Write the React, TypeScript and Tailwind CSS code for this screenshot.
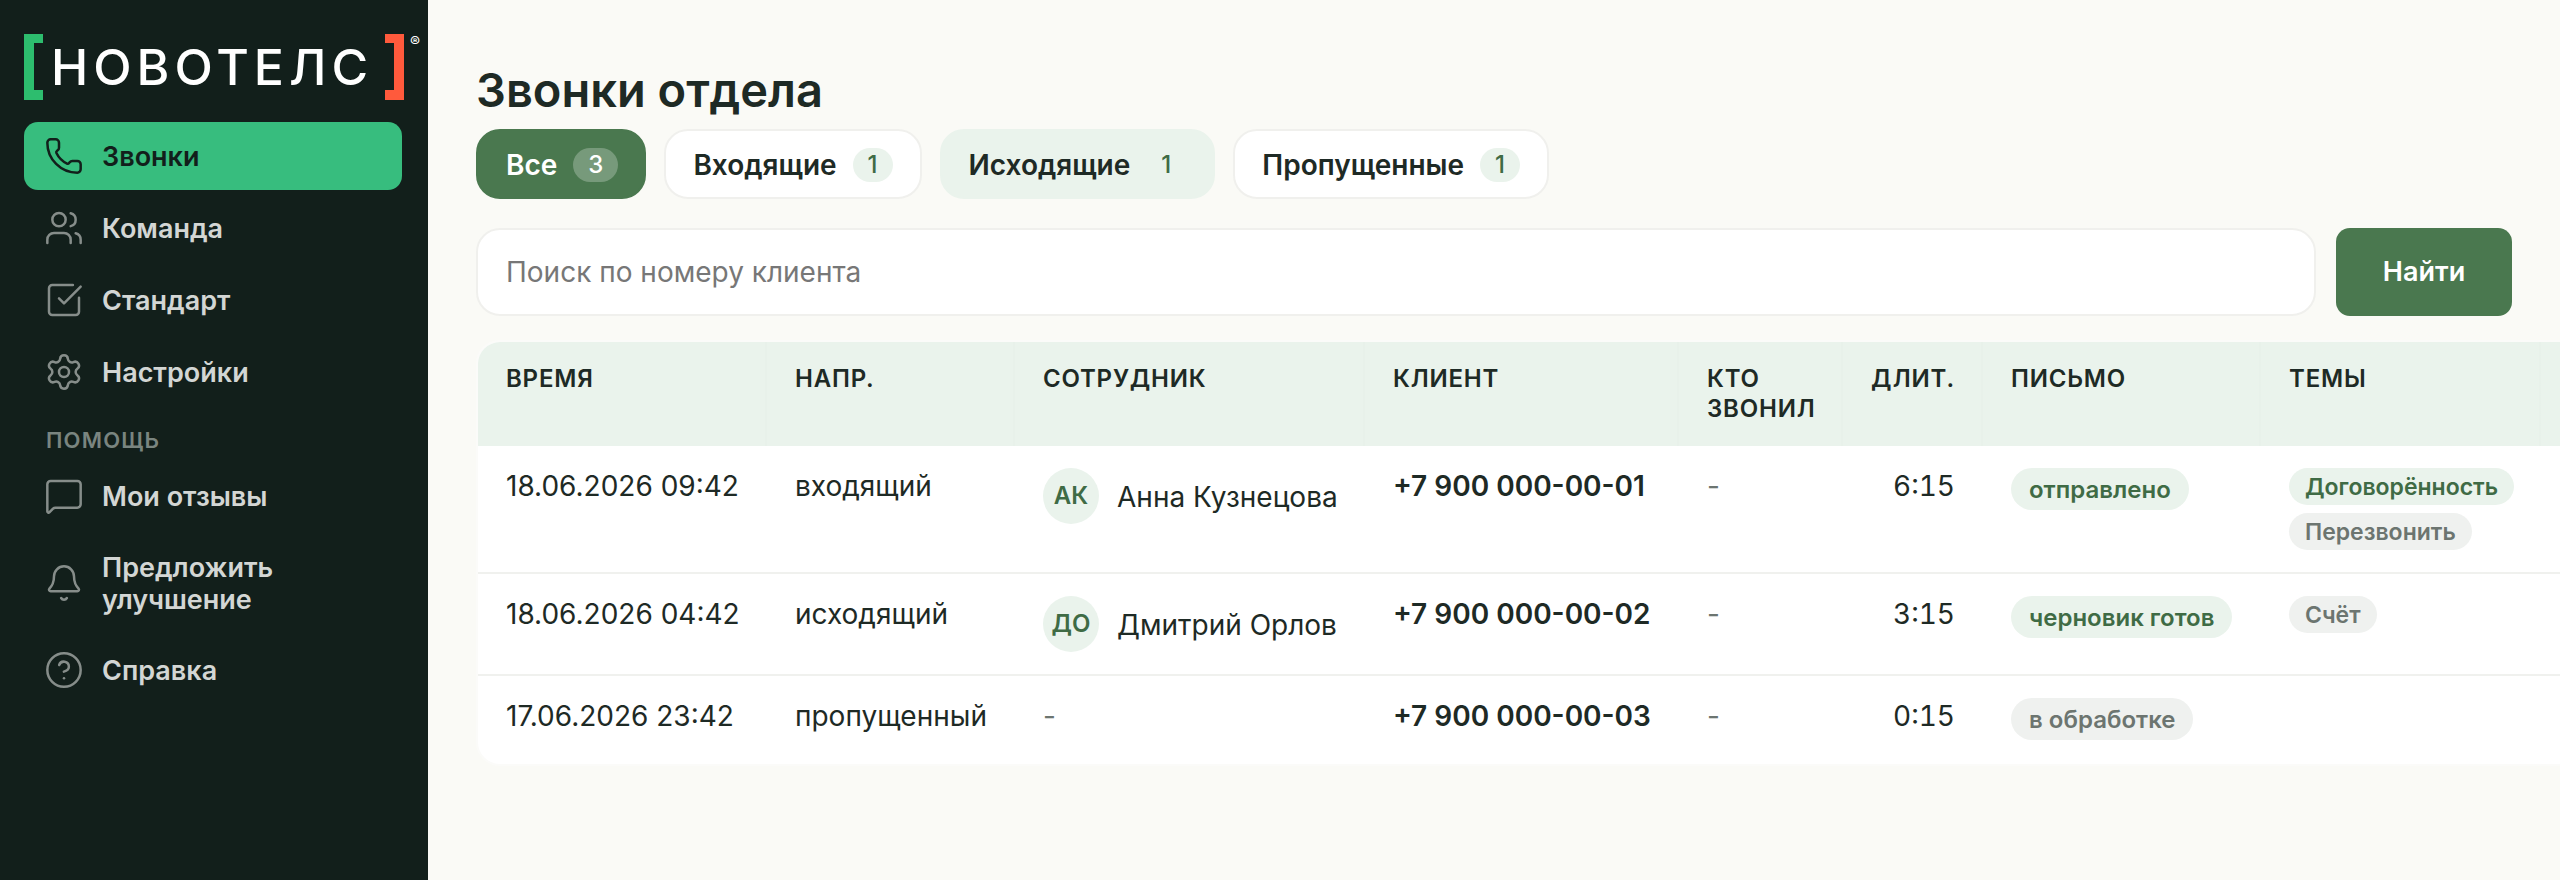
import React from 'react';
import { Phone, Users, SquareCheckBig, Settings, MessageSquare, Bell, CircleHelp } from 'lucide-react';

const font = { fontFamily: 'Inter, "Noto Sans", sans-serif' };

const navMain = [
  { label: 'Звонки', icon: Phone, active: true },
  { label: 'Команда', icon: Users },
  { label: 'Стандарт', icon: SquareCheckBig },
  { label: 'Настройки', icon: Settings },
];

const navHelp = [
  { label: 'Мои отзывы', icon: MessageSquare },
  { label: 'Предложить улучшение', icon: Bell },
  { label: 'Справка', icon: CircleHelp },
];

const tabs = [
  { label: 'Все', count: 3, kind: 'active' },
  { label: 'Входящие', count: 1, kind: 'plain' },
  { label: 'Исходящие', count: 1, kind: 'hover' },
  { label: 'Пропущенные', count: 1, kind: 'plain' },
];

const columns = [
  { label: 'Время', w: 'w-[289px]' },
  { label: 'Напр.', w: 'w-[248px]' },
  { label: 'Сотрудник', w: 'w-[350px]' },
  { label: 'Клиент', w: 'w-[314px]' },
  { label: 'Кто звонил', w: 'w-[164px]' },
  { label: 'Длит.', w: 'w-[140px]', right: true },
  { label: 'Письмо', w: 'w-[278px]' },
  { label: 'Темы', w: 'w-[280px]' },
  { label: '', w: 'w-[200px]' },
];

const calls = [
  {
    time: '18.06.2026 09:42',
    dir: 'входящий',
    initials: 'АК',
    name: 'Анна Кузнецова',
    phone: '+7 900 000-00-01',
    dur: '6:15',
    mail: { text: 'отправлено', green: true },
    topics: [
      { text: 'Договорённость', green: true },
      { text: 'Перезвонить', green: false },
    ],
  },
  {
    time: '18.06.2026 04:42',
    dir: 'исходящий',
    initials: 'ДО',
    name: 'Дмитрий Орлов',
    phone: '+7 900 000-00-02',
    dur: '3:15',
    mail: { text: 'черновик готов', green: true },
    topics: [{ text: 'Счёт', green: false }],
  },
  {
    time: '17.06.2026 23:42',
    dir: 'пропущенный',
    phone: '+7 900 000-00-03',
    dur: '0:15',
    mail: { text: 'в обработке', green: false },
    topics: [],
  },
];

const Logo = () => (
  <div className="flex items-start pl-[24px] h-[66px] mt-[34px] mb-[22px]">
    <svg width="19" height="66" viewBox="0 0 19 66" className="shrink-0">
      <path d="M0 0H19V9H10V56H19V66H0Z" fill="#2dbd6e" />
    </svg>
    <span className="w-[334px] ml-[8px] mt-[5px] text-[50px] leading-[56px] font-medium tracking-[5px] text-white whitespace-nowrap">
      НОВОТЕЛС
    </span>
    <svg width="19" height="66" viewBox="0 0 19 66" className="shrink-0">
      <path d="M19 0H0V9H9V56H0V66H19Z" fill="#ff5a3c" />
    </svg>
    <span className="ml-[6px] text-[15px] leading-[16px] text-white">®</span>
  </div>
);

const NavItem = ({ item }: { item: any }) => {
  const Icon = item.icon;
  return (
    <div
      className={`flex items-center gap-[18px] px-[20px] py-[16px] rounded-[14px] text-[27px] leading-[32px] font-semibold ${
        item.active ? 'bg-[#37bd7e] text-[#121f1b]' : 'text-[#d3d6d4]'
      }`}
    >
      <Icon size={40} strokeWidth={1.5} className={`shrink-0 -my-[2px] ${item.active ? '' : 'opacity-60'}`} />
      <span className="pt-[2px]">{item.label}</span>
    </div>
  );
};

const Sidebar = () => (
  <aside className="w-[428px] shrink-0 bg-[#121f1b] flex flex-col">
    <Logo />
    <nav className="flex flex-col gap-[4px] pl-[24px] pr-[26px]">
      {navMain.map((n) => (
        <NavItem key={n.label} item={n} />
      ))}
      <div className="px-[22px] pt-[16px] pb-[4px] text-[22px] leading-[28px] font-semibold tracking-[1.2px] uppercase text-[#7a8580]">
        Помощь
      </div>
      {navHelp.map((n) => (
        <NavItem key={n.label} item={n} />
      ))}
    </nav>
  </aside>
);

const Tab = ({ tab }: { tab: any }) => {
  const styles: Record<string, string> = {
    active: 'bg-[#4a784f] border-[#4a784f] text-white pl-[28px] pr-[26px]',
    plain: 'bg-white border-[#f0f0ed] text-[#1e2a25] pl-[27px] pr-[27px]',
    hover: 'bg-[#eaf3ec] border-[#eaf3ec] text-[#1e2a25] pl-[27px] pr-[27px]',
  };
  const badge: Record<string, string> = {
    active: 'bg-white/25 text-white',
    plain: 'bg-[#eaf3ec] text-[#3f6b45]',
    hover: 'bg-[#eaf3ec] text-[#3f6b45]',
  };
  return (
    <div className={`flex items-center gap-[16px] h-[70px] pt-[2px] rounded-[24px] border-2 text-[28px] font-semibold ${styles[tab.kind]}`}>
      <span>{tab.label}</span>
      <span className={`h-[34px] px-[15px] rounded-full flex items-center justify-center text-[24px] font-medium ${badge[tab.kind]}`}>
        {tab.count}
      </span>
    </div>
  );
};

const Pill = ({ pill, big }: { pill: any; big?: boolean }) => (
  <span
    className={`inline-block rounded-full font-semibold w-fit ${
      big ? 'text-[24px] h-[42px] leading-[44px] px-[18px]' : 'text-[23px] h-[37px] leading-[39px] px-[16px]'
    } ${pill.green ? 'bg-[#eaf3ec] text-[#3f6b45]' : 'bg-[#eff1ef] text-[#6c7570]'}`}
  >
    {pill.text}
  </span>
);

const Td = ({ className = '', children }: { className?: string; children?: React.ReactNode }) => (
  <td className={`align-top px-[28px] py-[22px] ${className}`}>{children}</td>
);

const App: React.FC = () => {
  return (
    <div className="flex h-[880px] overflow-hidden bg-[#fafaf6] text-[#1e2a25]" style={font}>
      <Sidebar />
      <main className="flex-1 min-w-0 px-[48px] pt-[60px]">
        <h1 className="text-[47px] leading-[60px] font-semibold mb-[9px]">Звонки отдела</h1>

        <div className="flex gap-[18px] mb-[29px]">
          {tabs.map((t) => (
            <Tab key={t.label} tab={t} />
          ))}
        </div>

        <div className="flex gap-[20px] mb-[24px]">
          <input
            placeholder="Поиск по номеру клиента"
            className="flex-1 h-[88px] px-[28px] bg-white border-2 border-[#f0f0ed] rounded-[24px] text-[28px] outline-none placeholder:text-[#777]"
          />
          <button className="w-[176px] h-[88px] rounded-[14px] bg-[#4a784f] text-white text-[27px] font-semibold">
            Найти
          </button>
        </div>

        <div className="w-max bg-white border-2 border-[#fbfbf9] rounded-[24px] pb-[2px] overflow-hidden">
          <table className="w-[2263px] table-fixed border-separate border-spacing-0 text-[28px] leading-[36px]">
            <thead>
              <tr className="bg-[#eaf3ec]">
                {columns.map((c) => (
                  <th
                    key={c.label}
                    className={`${c.w} align-top px-[28px] pt-[22px] pb-[22px] text-[24px] leading-[30px] font-semibold uppercase tracking-[0.8px] border-r-2 border-[#e8f1ea] ${
                      c.right ? 'text-right' : 'text-left'
                    }`}
                  >
                    {c.label}
                  </th>
                ))}
              </tr>
            </thead>
            <tbody>
              {calls.map((call, i) => (
                <tr key={call.time} className={i > 0 ? '[&>td]:border-t-2 [&>td]:border-[#f0f1ee]' : ''}>
                  <Td className="whitespace-nowrap">{call.time}</Td>
                  <Td className="whitespace-nowrap">{call.dir}</Td>
                  <Td>
                    {call.name ? (
                      <div className="flex items-center gap-[18px]">
                        <span className="w-[56px] h-[56px] rounded-full bg-[#eaf3ec] text-[#3f6b45] text-[24px] font-semibold flex items-center justify-center shrink-0">
                          {call.initials}
                        </span>
                        <span className="pt-[2px] whitespace-nowrap">{call.name}</span>
                      </div>
                    ) : (
                      <span className="text-[#6c7570]">-</span>
                    )}
                  </Td>
                  <Td className="font-semibold whitespace-nowrap">{call.phone}</Td>
                  <Td className="text-[#6c7570]">-</Td>
                  <Td className="text-right tabular-nums">{call.dur}</Td>
                  <Td>
                    <Pill pill={call.mail} big />
                  </Td>
                  <Td>
                    <div className="flex flex-col gap-[8px]">
                      {call.topics.map((t) => (
                        <Pill key={t.text} pill={t} />
                      ))}
                    </div>
                  </Td>
                  <Td />
                </tr>
              ))}
            </tbody>
          </table>
        </div>
      </main>
    </div>
  );
};

export default App;
